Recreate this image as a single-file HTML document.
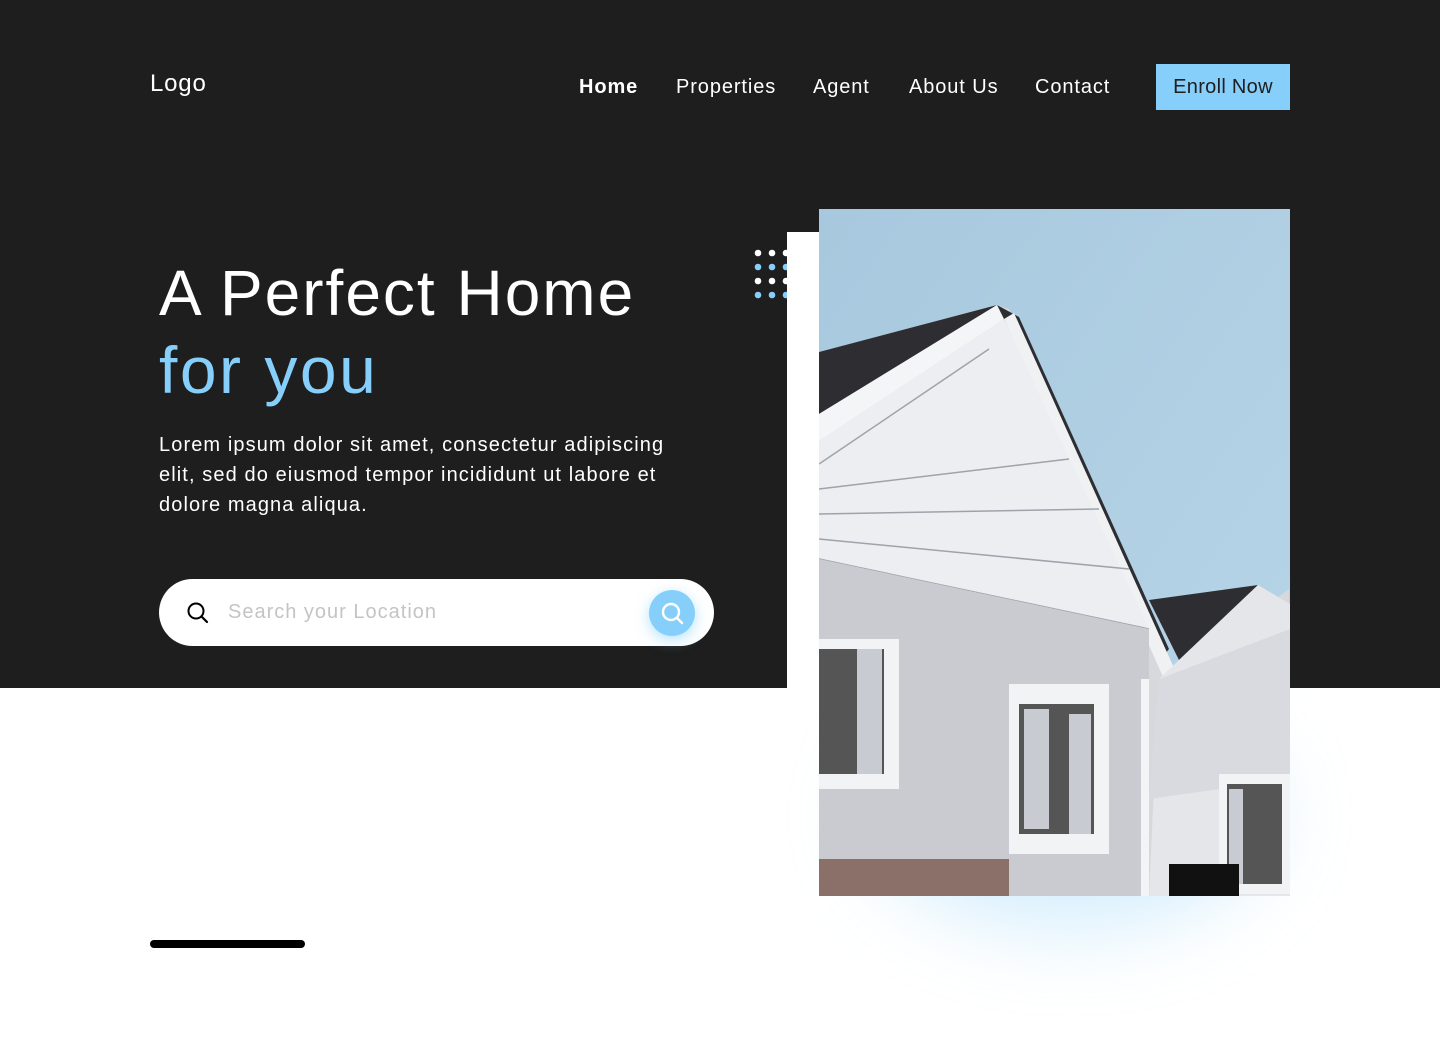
<!DOCTYPE html>
<html><head><meta charset="utf-8"><style>
*{margin:0;padding:0;box-sizing:border-box}
body{width:1440px;height:1047px;background:#fff;position:relative;overflow:hidden;font-family:"Liberation Sans",sans-serif}
.dark{position:absolute;left:0;top:0;width:1440px;height:688px;background:#1e1e1e}
.a{position:absolute;white-space:nowrap}
.nav{color:#fff;font-size:20px;top:76px;letter-spacing:0.9px}
</style></head><body>
<div class="dark"></div>
<div class="a" style="left:150px;top:70px;color:#fff;font-size:24px;letter-spacing:0.8px">Logo</div>
<div class="a nav" style="left:579px;font-weight:bold">Home</div>
<div class="a nav" style="left:676px">Properties</div>
<div class="a nav" style="left:813px">Agent</div>
<div class="a nav" style="left:909px">About Us</div>
<div class="a nav" style="left:1035px">Contact</div>
<div class="a" style="left:1156px;top:64px;width:134px;height:46px;background:#86cffa;color:#1e1e1e;font-size:20px;line-height:46px;text-align:center;letter-spacing:0.3px">Enroll Now</div>
<div class="a" style="left:159px;top:256px;color:#fff;font-size:64px;letter-spacing:2px">A Perfect Home</div>
<div class="a" style="left:159px;top:332px;color:#86cffa;font-size:66px;letter-spacing:2.5px">for you</div>
<div class="a" style="left:159px;top:430px;color:#fff;font-size:20px;line-height:30px;letter-spacing:1.1px">Lorem ipsum dolor sit amet, consectetur adipiscing<br>elit, sed do eiusmod tempor incididunt ut labore et<br>dolore magna aliqua.</div>
<div class="a" style="left:159px;top:579px;width:555px;height:67px;background:#fff;border-radius:34px"></div>
<svg class="a" style="left:186px;top:601px" width="24" height="24" viewBox="0 0 24 24"><circle cx="10" cy="10" r="7.5" fill="none" stroke="#000" stroke-width="2"/><path d="M15.5 15.5L21 21" stroke="#000" stroke-width="2.2" stroke-linecap="round"/></svg>
<div class="a" style="left:228px;top:601px;color:#c4c4c4;font-size:20px;letter-spacing:1px">Search your Location</div>
<div class="a" style="left:649px;top:590px;width:46px;height:46px;border-radius:50%;background:#86cffa;box-shadow:0 4px 14px rgba(134,207,250,.6)"></div>
<svg class="a" style="left:659px;top:600px" width="26" height="26" viewBox="0 0 26 26"><circle cx="12" cy="12" r="8" fill="none" stroke="#fff" stroke-width="2.4"/><path d="M18 18L23 23" stroke="#fff" stroke-width="2.4" stroke-linecap="round"/></svg>
<svg class="a" style="left:750px;top:245px" width="40" height="60"><g fill="#fff"><circle cx="8" cy="8" r="3.3"/><circle cx="22" cy="8" r="3.3"/><circle cx="36" cy="8" r="3.3"/><circle cx="8" cy="36" r="3.3"/><circle cx="22" cy="36" r="3.3"/><circle cx="36" cy="36" r="3.3"/></g><g fill="#86cffa"><circle cx="8" cy="22" r="3.3"/><circle cx="22" cy="22" r="3.3"/><circle cx="36" cy="22" r="3.3"/><circle cx="8" cy="50" r="3.3"/><circle cx="22" cy="50" r="3.3"/><circle cx="36" cy="50" r="3.3"/></g></svg>
<div class="a" style="left:787px;top:232px;width:40px;height:456px;background:#fff"></div>
<div class="a" style="left:870px;top:700px;width:400px;height:230px;border-radius:50%;background:rgba(134,207,250,.35);filter:blur(40px)"></div>
<svg class="a" style="left:819px;top:209px" width="471" height="687" viewBox="0 0 471 687">
<defs><linearGradient id="s" x1="0" y1="0" x2="1" y2="1"><stop offset="0" stop-color="#a7c8de"/><stop offset="1" stop-color="#b9d6e8"/></linearGradient></defs>
<rect width="471" height="687" fill="url(#s)"/>
<polygon points="0,143 178,96 190,100 350,470 470,380 471,687 0,687" fill="#d6d8dc"/>
<polygon points="0,143 178,96 0,205" fill="#2e2e32"/>
<polygon points="178,96 200,108 350,440 340,452" fill="#2e2e32"/>
<polygon points="0,205 178,96 185,110 0,232" fill="#f4f5f7"/>
<polygon points="185,110 345,470 360,470 195,104" fill="#f0f1f3"/>
<polygon points="0,232 185,110 330,420 330,480 0,350" fill="#eceef1"/>
<g stroke="#9ea2aa" stroke-width="1.5"><line x1="0" y1="255" x2="170" y2="140"/><line x1="0" y1="280" x2="250" y2="250"/><line x1="0" y1="305" x2="280" y2="300"/><line x1="0" y1="330" x2="310" y2="360"/><line x1="0" y1="350" x2="330" y2="420"/></g>
<polygon points="0,350 330,420 330,687 0,687" fill="#c9cbd0"/>
<polygon points="330,391 439,376 360,451" fill="#2e2e32"/>
<polygon points="439,376 471,395 471,687 330,687 340,470" fill="#e4e6ea"/>
<polygon points="340,470 471,420 471,570 330,590" fill="#d8dae0"/>
<rect x="0" y="430" width="80" height="150" fill="#f2f3f5"/><rect x="0" y="440" width="65" height="125" fill="#555"/><rect x="38" y="440" width="25" height="125" fill="#c8ccd2"/>
<rect x="190" y="475" width="100" height="170" fill="#f2f3f5"/><rect x="200" y="495" width="75" height="130" fill="#555"/><rect x="205" y="500" width="25" height="120" fill="#c8ccd2"/><rect x="250" y="505" width="22" height="120" fill="#c8ccd2"/>
<rect x="400" y="565" width="71" height="120" fill="#f2f3f5"/><rect x="408" y="575" width="55" height="100" fill="#555"/><rect x="410" y="580" width="14" height="95" fill="#c8ccd2"/>
<rect x="322" y="470" width="8" height="217" fill="#f4f4f6"/>
<rect x="350" y="655" width="70" height="32" fill="#111"/>
<rect x="0" y="650" width="190" height="37" fill="#8a7068"/>
</svg>
<div class="a" style="left:150px;top:940px;width:155px;height:8px;border-radius:4px;background:#000"></div>
</body></html>
